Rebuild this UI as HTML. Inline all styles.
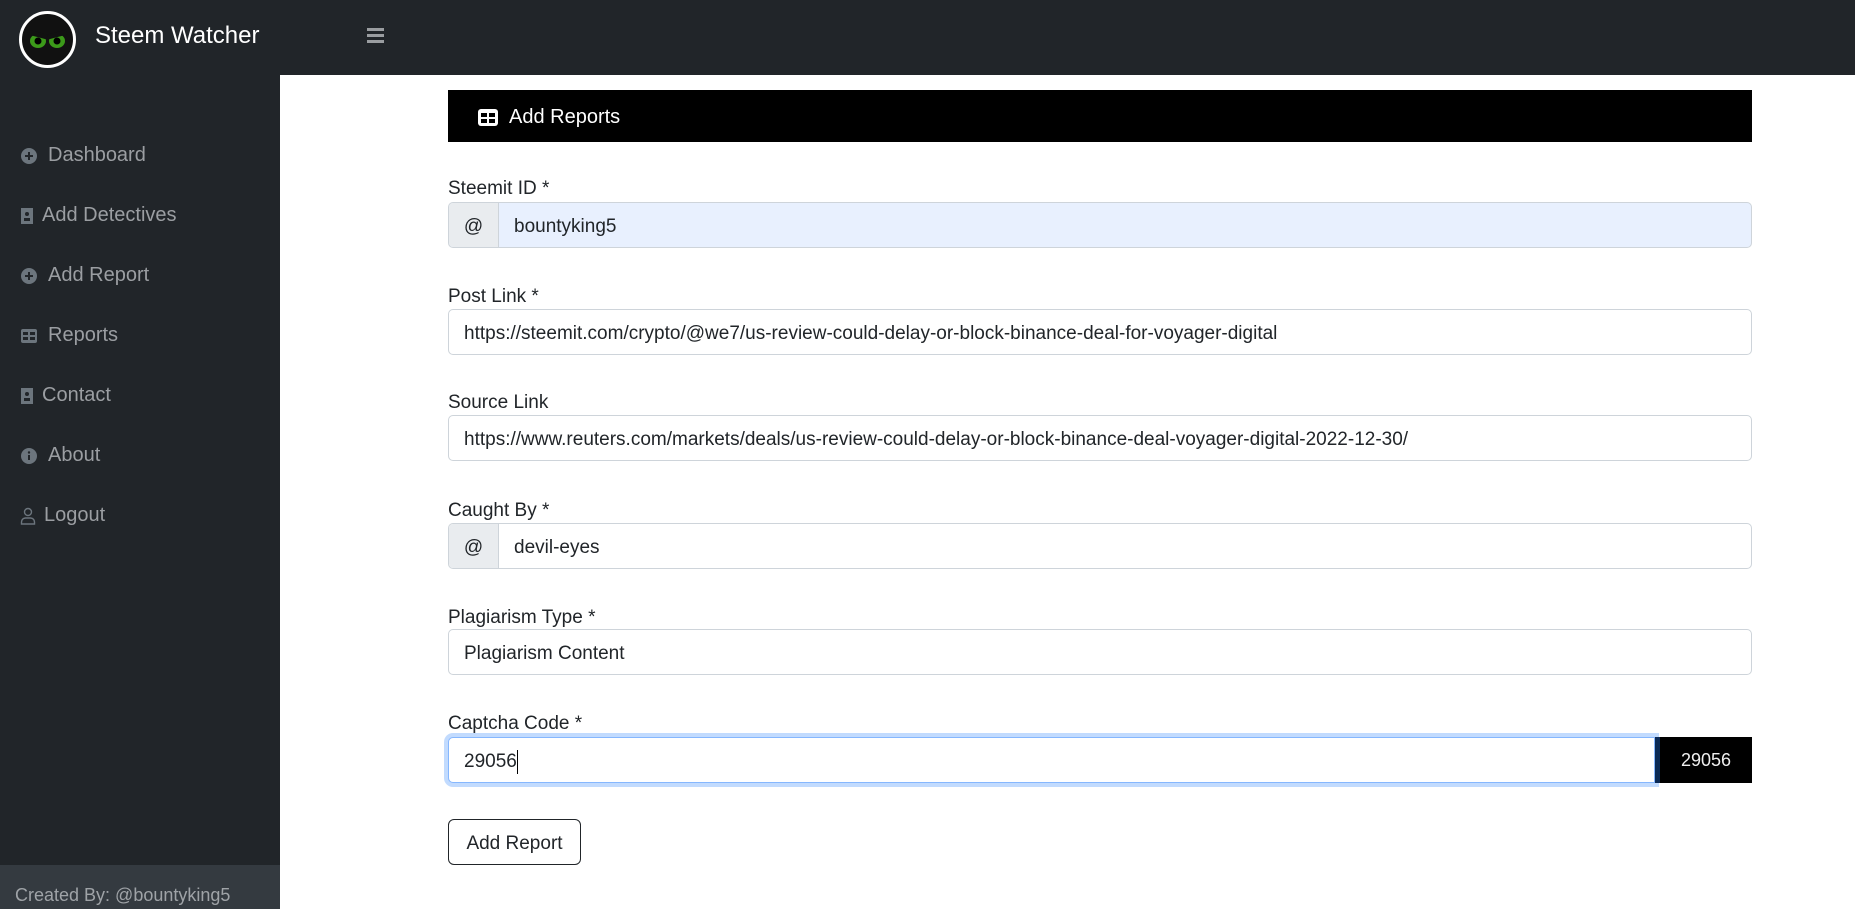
<!DOCTYPE html>
<html><head><meta charset="utf-8"><style>
*{box-sizing:border-box;margin:0;padding:0}
body{width:1855px;height:909px;overflow:hidden;background:#fff;font-family:"Liberation Sans",sans-serif;position:relative}
.nav{position:absolute;left:0;top:0;width:1855px;height:75px;background:#212529}
.side{position:absolute;left:0;top:75px;width:280px;height:834px;background:#212529}
.foot{position:absolute;left:0;top:865px;width:280px;height:44px;background:#343a40;color:#9fa3a7;font-size:18px;padding:20px 0 0 15px;line-height:20px}
.brand{position:absolute;left:95px;top:22px;color:#fff;font-size:24px}
.logo{position:absolute;left:19px;top:11px;width:57px;height:57px;border-radius:50%;border:3px solid #fff;background:#111}
.ham{position:absolute;left:367px;top:28px;width:17px}
.ham i{display:block;height:3px;background:#9a9da0;margin-bottom:3px}
.item{position:absolute;left:20px;color:#9b9ea2;font-size:20px;display:flex;align-items:center}
.item svg{margin-right:10px}
.hdr{position:absolute;left:448px;top:90px;width:1304px;height:52px;background:#000;color:#fff;font-size:20px;display:flex;align-items:center;padding-left:30px;padding-top:3px}
.lbl{position:absolute;left:448px;font-size:19px;color:#212529}
.inp{position:absolute;left:448px;width:1304px;height:46px;border:1px solid #ced4da;border-radius:5px;font-size:19px;color:#212529;display:flex;align-items:center;padding-left:15px;padding-top:4px;background:#fff}
.grp{padding-left:0;padding-top:0;overflow:hidden}
.grp .ad{width:50px;height:100%;background:#e9ecef;border-right:1px solid #ced4da;display:flex;align-items:center;justify-content:center;padding-top:3px}
.grp .tx{padding-left:15px;padding-top:4px}
.btn{position:absolute;left:448px;top:819px;width:133px;height:46px;border:1px solid #212529;border-radius:6px;font-size:19px;display:flex;align-items:center;justify-content:center;color:#212529;padding-top:4px}
</style></head><body>
<div class="nav">
<div class="logo"><svg width="51" height="51" viewBox="0 0 51 51"><ellipse cx="16" cy="27" rx="8" ry="7" fill="#3c9a1a"/><ellipse cx="35" cy="27" rx="8" ry="7" fill="#3c9a1a"/><circle cx="16" cy="27" r="3.5" fill="#000"/><circle cx="35" cy="27" r="3.5" fill="#000"/><path d="M6 18 L25 23 M45 18 L26 23" stroke="#111" stroke-width="5"/></svg></div>
<div class="brand">Steem Watcher</div>
<div class="ham"><i></i><i></i><i></i></div>
</div>
<div class="side">
<div class="item" style="top:69px"><svg width="18" height="18"><circle cx="9" cy="9" r="8" fill="#6c757d"/><path d="M9 5v8M5 9h8" stroke="#212529" stroke-width="2"/></svg>Dashboard</div>
<div class="item" style="top:129px"><svg width="14" height="18" style="margin-right:8px"><rect x="1" y="1" width="12" height="16" fill="#6c757d"/><circle cx="7" cy="7" r="2" fill="#212529"/><rect x="4" y="11" width="6" height="3" fill="#212529"/></svg>Add Detectives</div>
<div class="item" style="top:189px"><svg width="18" height="18"><circle cx="9" cy="9" r="8" fill="#6c757d"/><path d="M9 5v8M5 9h8" stroke="#212529" stroke-width="2"/></svg>Add Report</div>
<div class="item" style="top:249px"><svg width="18" height="16"><rect x="1" y="1" width="16" height="14" rx="2" fill="#6c757d"/><rect x="3" y="4" width="5" height="3" fill="#212529"/><rect x="10" y="4" width="5" height="3" fill="#212529"/><rect x="3" y="9" width="5" height="3" fill="#212529"/><rect x="10" y="9" width="5" height="3" fill="#212529"/></svg>Reports</div>
<div class="item" style="top:309px"><svg width="14" height="18" style="margin-right:8px"><rect x="1" y="1" width="12" height="16" fill="#6c757d"/><circle cx="7" cy="7" r="2" fill="#212529"/><rect x="4" y="11" width="6" height="3" fill="#212529"/></svg>Contact</div>
<div class="item" style="top:369px"><svg width="18" height="18"><circle cx="9" cy="9" r="8" fill="#6c757d"/><rect x="8" y="8" width="2" height="5" fill="#212529"/><circle cx="9" cy="5.5" r="1.2" fill="#212529"/></svg>About</div>
<div class="item" style="top:429px"><svg width="16" height="18" style="margin-right:8px"><circle cx="8" cy="5" r="3.5" fill="none" stroke="#6c757d" stroke-width="1.4"/><path d="M1.5 17v-2a4 4 0 0 1 4-4h5a4 4 0 0 1 4 4v2z" fill="none" stroke="#6c757d" stroke-width="1.4"/></svg>Logout</div>
</div>
<div class="foot">Created By: @bountyking5</div>
<div class="hdr"><svg width="20" height="17" style="margin-right:11px"><rect x="0" y="0" width="20" height="17" rx="3" fill="#fff"/><rect x="3" y="4" width="6" height="4" fill="#000"/><rect x="11" y="4" width="6" height="4" fill="#000"/><rect x="3" y="10" width="6" height="4" fill="#000"/><rect x="11" y="10" width="6" height="4" fill="#000"/></svg>Add Reports</div>
<div class="lbl" style="top:178px">Steemit ID *</div>
<div class="inp grp" style="top:202px;background:#e8f0fe"><div class="ad">@</div><div class="tx">bountyking5</div></div>
<div class="lbl" style="top:286px">Post Link *</div>
<div class="inp" style="top:309px">https://steemit.com/crypto/@we7/us-review-could-delay-or-block-binance-deal-for-voyager-digital</div>
<div class="lbl" style="top:392px">Source Link</div>
<div class="inp" style="top:415px">https://www.reuters.com/markets/deals/us-review-could-delay-or-block-binance-deal-voyager-digital-2022-12-30/</div>
<div class="lbl" style="top:500px">Caught By *</div>
<div class="inp grp" style="top:523px"><div class="ad">@</div><div class="tx">devil-eyes</div></div>
<div class="lbl" style="top:607px">Plagiarism Type *</div>
<div class="inp" style="top:629px">Plagiarism Content</div>
<div class="lbl" style="top:713px">Captcha Code *</div>
<div class="inp" style="top:737px;width:1207px;border:1px solid #86b7fe;box-shadow:0 0 0 4px #c2dbfe;border-radius:5px 0 0 5px">29056<span style="display:inline-block;width:1px;height:24px;background:#000"></span></div>
<div style="position:absolute;left:1655px;top:737px;width:97px;height:46px;background:#000;color:#eee;font-size:18px;display:flex;align-items:center;justify-content:center;border-left:5px solid #0b2a55">29056</div>
<div class="btn">Add Report</div>
</body></html>
